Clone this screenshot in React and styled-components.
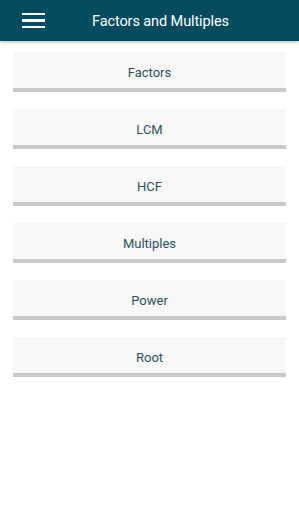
import React from 'react'
import styled, { createGlobalStyle } from 'styled-components'

const Global = createGlobalStyle`
  body {
    margin: 0;
    background: #fff;
    font-family: Roboto, "Liberation Sans", sans-serif;
  }
`

const Page = styled.div`
  width: 299px;
  min-height: 512px;
  background: #fff;
`

const TopBar = styled.header`
  height: 41px;
  background: #034b5e;
  display: flex;
  align-items: center;
  box-shadow: 0 1px 3px rgba(0, 0, 0, 0.3);
`

const MenuButton = styled.div`
  width: 23px;
  margin-left: 22px;
  display: flex;
  flex-direction: column;
  gap: 4px;

  span {
    display: block;
    height: 2.5px;
    background: #fff;
  }
`

const Title = styled.h1`
  flex: 1;
  margin: 1px 0 0 47px;
  font-size: 14.5px;
  font-weight: 400;
  color: #fff;
  letter-spacing: -0.1px;
`

const List = styled.div`
  padding: 11px 13px;
  display: flex;
  flex-direction: column;
  gap: 17px;
`

const Item = styled.div`
  height: 32px;
  padding-top: 4px;
  background: #f7f7f7;
  border-bottom: 4px solid #c9c9c9;
  display: flex;
  align-items: center;
  justify-content: center;
  font-size: 13px;
  line-height: 1;
  color: #2b545c;
`

const items = ['Factors', 'LCM', 'HCF', 'Multiples', 'Power', 'Root']

export default function App() {
  return (
    <Page>
      <Global />
      <TopBar>
        <MenuButton>
          <span />
          <span />
          <span />
        </MenuButton>
        <Title>Factors and Multiples</Title>
      </TopBar>
      <List>
        {items.map((name) => (
          <Item key={name}>{name}</Item>
        ))}
      </List>
    </Page>
  )
}
